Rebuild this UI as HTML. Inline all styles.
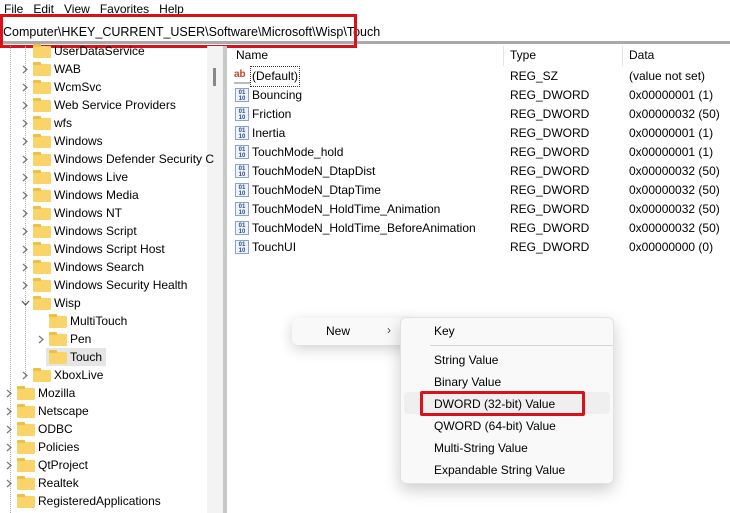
<!DOCTYPE html>
<html><head><style>
*{margin:0;padding:0;box-sizing:border-box}
body{width:730px;height:513px;overflow:hidden;background:#fff;font-family:"Liberation Sans",sans-serif;font-size:12px;color:#000;position:relative}
.a{position:absolute;white-space:nowrap}
.t{position:absolute;height:18px;line-height:18px;white-space:nowrap}
.f{position:absolute;width:18px;height:12px;background:#f8d46a;border-radius:1px}
.f:before{content:"";position:absolute;left:0;top:-2px;width:8px;height:3px;background:#eebf45;border-radius:1px 1px 0 0}
.ch{position:absolute;width:6px;height:9px;line-height:0}
.ch svg{display:block}
.r{position:absolute;height:19px;line-height:19px;white-space:nowrap}
.ic{position:absolute;width:14px;height:14px;border:1px solid #8aa3c8;background:#eef3fb;font-size:6px;line-height:6px;color:#2c4d8a;font-weight:bold;text-align:center;padding-top:1px}
.m{position:absolute;left:434px;white-space:nowrap;font-size:12px}
</style></head><body>
<div class="a" style="left:4px;top:1px;line-height:16px">File&nbsp;&nbsp;&nbsp;Edit&nbsp;&nbsp;&nbsp;View&nbsp;&nbsp;&nbsp;Favorites&nbsp;&nbsp;&nbsp;Help</div>
<div class="a" style="left:0;top:18px;width:730px;height:26px;background:#fff;border-bottom:3px solid #aaa"></div>
<div class="a" style="left:3px;top:23px;font-size:12.5px;line-height:18px">Computer\HKEY_CURRENT_USER\Software\Microsoft\Wisp\Touch</div>
<div class="a" style="left:0;top:14px;width:357px;height:34px;border:3px solid #d8121a"></div>
<!-- left pane -->
<div class="a" style="left:207px;top:46px;width:16px;height:467px;background:#f3f3f3"></div>
<div class="a" style="left:213px;top:68px;width:3px;height:18px;background:#888"></div>
<div class="a" style="left:223px;top:46px;width:4px;height:467px;background:#c8c8c8"></div>
<div class="a" style="left:10px;top:46px;height:467px;border-left:1px dotted #aaa"></div>
<div class="a" style="left:25px;top:46px;height:330px;border-left:1px dotted #aaa"></div>
<div class="a" style="left:46px;top:348px;width:60px;height:18px;background:#e5e5e5"></div>

<div id="tree"></div>

<script>
var L1=["UserDataService","WAB","WcmSvc","Web Service Providers","wfs","Windows","Windows Defender Security C","Windows Live","Windows Media","Windows NT","Windows Script","Windows Script Host","Windows Search","Windows Security Health","Wisp"];
var h="";
var R='<svg width="6" height="9" viewBox="0 0 6 9"><polyline points="1,1 5,4.5 1,8" fill="none" stroke="#777" stroke-width="1.2"/></svg>';
var D='<svg width="9" height="6" viewBox="0 0 9 6"><polyline points="1,1 4.5,5 8,1" fill="none" stroke="#555" stroke-width="1.2"/></svg>';
function row(y,ax,fx,tx,txt,arr){
 if(arr==1)h+='<div class="ch" style="left:'+(ax+1)+'px;top:'+(y+5)+'px">'+R+'</div>';
 if(arr==2)h+='<div class="ch" style="left:'+ax+'px;top:'+(y+6)+'px;width:9px">'+D+'</div>';
 h+='<div class="f" style="left:'+fx+'px;top:'+(y+4)+'px"></div>';
 h+='<div class="t" style="left:'+tx+'px;top:'+y+'px">'+txt+'</div>';
}
for(var i=0;i<L1.length;i++){row(42+18*i,21,33,54,L1[i],i==0?0:(i==14?2:1));}
row(312,37,49,70,"MultiTouch",0);
row(330,37,49,70,"Pen",1);
row(348,37,49,70,"Touch",0);
row(366,21,33,54,"XboxLive",1);
var L0=["Mozilla","Netscape","ODBC","Policies","QtProject","Realtek","RegisteredApplications"];
for(var j=0;j<L0.length;j++)row(384+18*j,5,17,38,L0[j],j==6?0:1);
document.getElementById("tree").innerHTML=h;
</script>

<!-- right pane -->
<div class="a" style="left:236px;top:47px;line-height:17px">Name</div>
<div class="a" style="left:503px;top:46px;height:20px;border-left:1px solid #e5e5e5"></div>
<div class="a" style="left:622px;top:46px;height:20px;border-left:1px solid #e5e5e5"></div>
<div class="a" style="left:510px;top:47px;line-height:17px">Type</div>
<div class="a" style="left:629px;top:47px;line-height:17px">Data</div>
<div id="vals"></div>
<script>
var V=[["(Default)","REG_SZ","(value not set)"],["Bouncing","REG_DWORD","0x00000001 (1)"],["Friction","REG_DWORD","0x00000032 (50)"],["Inertia","REG_DWORD","0x00000001 (1)"],["TouchMode_hold","REG_DWORD","0x00000001 (1)"],["TouchModeN_DtapDist","REG_DWORD","0x00000032 (50)"],["TouchModeN_DtapTime","REG_DWORD","0x00000032 (50)"],["TouchModeN_HoldTime_Animation","REG_DWORD","0x00000032 (50)"],["TouchModeN_HoldTime_BeforeAnimation","REG_DWORD","0x00000032 (50)"],["TouchUI","REG_DWORD","0x00000000 (0)"]];
var g="";
for(var k=0;k<V.length;k++){var y=67+19*k;
 if(k==0)g+='<div class="a" style="left:234px;top:'+(y+2)+'px;width:16px;height:15px;color:#c4432b;font-weight:bold;font-size:10px;line-height:12px;border-bottom:2px solid #bbb">ab</div>';
 else g+='<div class="ic" style="left:235px;top:'+(y+2)+'px">01<br>10</div>';
 g+='<div class="r" style="left:252px;top:'+y+'px'+(k==0?';outline:1px dotted #333;padding:0 1px;left:251px':'')+'">'+V[k][0]+'</div>';
 g+='<div class="r" style="left:510px;top:'+y+'px">'+V[k][1]+'</div>';
 g+='<div class="r" style="left:629px;top:'+y+'px">'+V[k][2]+'</div>';}
document.getElementById("vals").innerHTML=g;
</script>

<!-- context menus -->
<div class="a" style="left:292px;top:318px;width:120px;height:27px;background:#f9f9f9;border-radius:6px;box-shadow:0 4px 14px rgba(0,0,0,.18)"></div>
<div class="a" style="left:326px;top:324px">New</div>
<div class="a" style="left:387px;top:323px;color:#444">›</div>
<div class="a" style="left:400px;top:317px;width:214px;height:167px;background:#f9f9f9;border:1px solid #e2e2e2;border-radius:6px;box-shadow:0 6px 16px rgba(0,0,0,.2)"></div>
<div class="m" style="top:324px">Key</div>
<div class="a" style="left:430px;top:345px;width:183px;height:1px;background:#d5d5d5"></div>
<div class="m" style="top:353px">String Value</div>
<div class="m" style="top:375px">Binary Value</div>
<div class="a" style="left:404px;top:392px;width:206px;height:22px;background:#efefef;border-radius:4px"></div>
<div class="m" style="top:397px">DWORD (32-bit) Value</div>
<div class="m" style="top:419px">QWORD (64-bit) Value</div>
<div class="m" style="top:441px">Multi-String Value</div>
<div class="m" style="top:463px">Expandable String Value</div>
<div class="a" style="left:420px;top:391px;width:165px;height:25px;border:3px solid #d8121a;border-radius:2px"></div>
</body></html>
